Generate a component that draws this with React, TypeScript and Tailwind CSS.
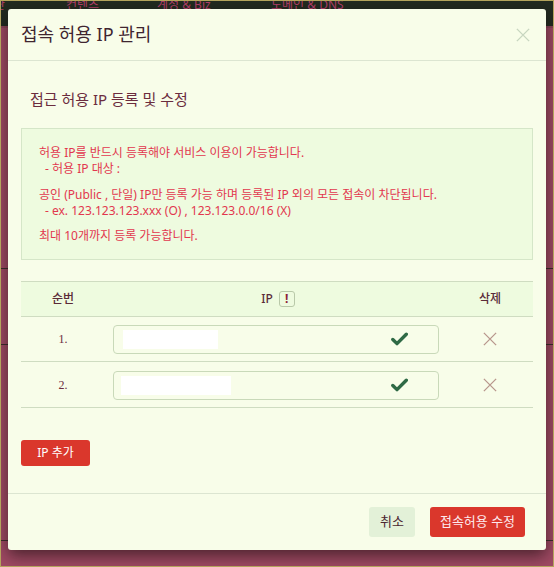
import React from "react";

const font = { fontFamily: '"Noto Sans", "Noto Sans CJK KR", sans-serif' };

function Check() {
  return (
    <svg width="17" height="14" viewBox="0 0 17 14">
      <path d="M1.8 7.5 L6 11.6 L15.3 2.2" fill="none" stroke="#2f6a45" strokeWidth="3.4" strokeLinecap="round" strokeLinejoin="round" />
    </svg>
  );
}

function XIcon({ color, size, w }: { color: string; size: number; w: number }) {
  return (
    <svg width={size} height={size} viewBox="0 0 16 16">
      <path d="M1 1 L15 15 M15 1 L1 15" stroke={color} strokeWidth={w} fill="none" />
    </svg>
  );
}

function Row({ n, boxW, boxOff }: { n: string; boxW: number; boxOff: number }) {
  return (
    <div className="flex h-[45px] items-center border-b border-[#cfdcc1]">
      <div className="w-[84px] text-center text-[12px] text-[#6b2c3e]" style={{ fontFamily: '"Liberation Serif", serif' }}>
        {n}
      </div>
      <div className="w-[342px] px-[8px]">
        <div className="flex h-[29px] items-center rounded-[4px] border border-[#c9d9b9] bg-[#f8fde9] pl-[8px] pr-[30px]">
          <div className="bg-white" style={{ width: boxW, height: 19, marginLeft: boxOff - 8 }} />
          <div className="flex-1" />
          <Check />
        </div>
      </div>
      <div className="flex flex-1 justify-center">
        <XIcon color="#b8968c" size={14} w={1.5} />
      </div>
    </div>
  );
}

export default function App() {
  return (
    <div className="relative h-[567px] w-[554px] overflow-hidden border border-[#b4a45c] bg-[#a04a64]" style={font}>
      {/* page behind */}
      <div className="flex h-[25px] items-start overflow-hidden bg-[#222b20] text-[12px] leading-[12px] text-[#b33f6b]">
        <span className="-ml-[7px] mt-[-2px] w-[12px] shrink-0">관</span>
        <span className="ml-[60px] mt-[-2px] w-[36px] shrink-0">컨텐츠</span>
        <span className="ml-[55px] mt-[-2px] w-[60px] shrink-0 whitespace-nowrap">계정 &amp; Biz</span>
        <span className="ml-[54px] mt-[-2px] shrink-0 whitespace-nowrap">도메인 &amp; DNS</span>
      </div>
      <div className="h-[2px] bg-[#8a4458]" />
      <div className="mt-[240px] h-[1px] bg-[#3d2c2c]" />
      <div className="mt-[75px] h-[1px] bg-[#3d2c2c]" />
      <div className="mt-[195px] h-[1px] bg-[#3d2c2c]" />

      {/* modal */}
      <div className="absolute left-[7px] top-[8px] flex h-[541px] w-[538px] flex-col rounded-[3px] bg-[#f8fde9] shadow-[0_6px_16px_rgba(20,10,10,0.6)]">
        <div className="flex h-[53px] items-center justify-between border-b border-[#dce5d1] pl-[13px] pr-[16px]">
          <div className="text-[18px] text-[#3f2530]">접속 허용 IP 관리</div>
          <XIcon color="#c8d6c0" size={14} w={1.6} />
        </div>
        <div className="flex-1 px-[13px] pb-[27px]">
          <div className="mt-[28px] pl-[9px] text-[15px] leading-[20px] text-[#6b2c3e]">접근 허용 IP 등록 및 수정</div>
          <div className="mt-[19px] border border-[#d5e6c8] bg-[#eefbdf] pb-[15px] pl-[17px] pt-[16px] text-[12px] leading-[16px] text-[#e2374e]">
            <div>허용 IP를 반드시 등록해야 서비스 이용이 가능합니다.</div>
            <div className="pl-[6px]">- 허용 IP 대상 :</div>
            <div className="mt-[10px]">공인 (Public , 단일) IP만 등록 가능 하며 등록된 IP 외의 모든 접속이 차단됩니다.</div>
            <div className="pl-[6px]">- ex. 123.123.123.xxx (O) , 123.123.0.0/16 (X)</div>
            <div className="mt-[9px]">최대 10개까지 등록 가능합니다.</div>
          </div>
          <div className="mt-[21px] border-t border-[#cfdcc1]">
            <div className="flex h-[35px] items-center border-b border-[#cfdcc1] bg-[#eefbdf] text-[12px] font-medium text-[#5a2a38]">
              <div className="w-[84px] text-center">순번</div>
              <div className="flex w-[342px] items-center justify-center gap-[6px] pl-[4px]">
                <span>IP</span>
                <span className="flex h-[16px] w-[16px] items-center justify-center rounded-[3px] border border-[#b9c9a9] text-[12px] font-bold leading-none text-[#8c1f38]">!</span>
              </div>
              <div className="flex-1 text-center">삭제</div>
            </div>
            <Row n="1." boxW={95} boxOff={9} />
            <div className="h-[1px]" />
            <Row n="2." boxW={110} boxOff={7} />
          </div>
          <button className="mt-[32px] h-[26px] w-[69px] rounded-[3px] bg-[#da372c] text-[12px] text-white">IP 추가</button>
        </div>
        <div className="flex items-center justify-end gap-[15px] border-t border-[#dce5d1] pb-[13px] pr-[21px] pt-[13px]">
          <button className="h-[30px] w-[46px] rounded-[3px] bg-[#e3f1d8] text-[13px] text-[#4a2530]">취소</button>
          <button className="h-[30px] w-[95px] rounded-[3px] bg-[#da372c] text-[13px] text-[#fde8ec]">접속허용 수정</button>
        </div>
      </div>
    </div>
  );
}
